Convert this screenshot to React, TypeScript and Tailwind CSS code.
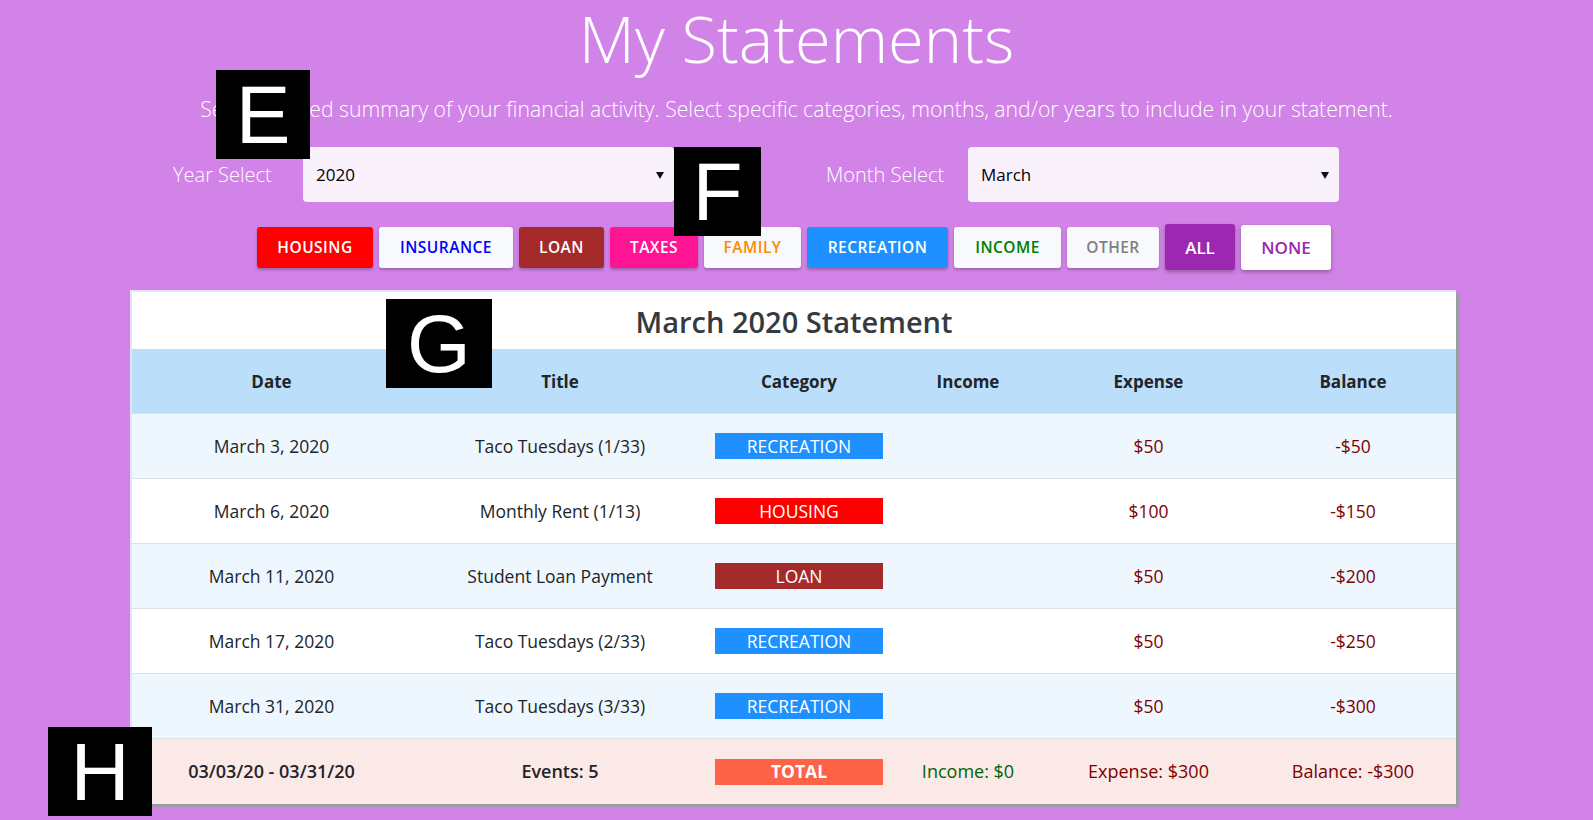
import React from "react";

const buttons: { label: string; cls: string }[] = [
  { label: "HOUSING", cls: "w-[116px] h-[41px] bg-[#ff0000] text-white" },
  { label: "INSURANCE", cls: "w-[134px] h-[41px] bg-[#f8f9fc] text-[#0000ff]" },
  { label: "LOAN", cls: "w-[85px] h-[41px] bg-[#a52a2a] text-white" },
  { label: "TAXES", cls: "w-[88px] h-[41px] bg-[#ff1493] text-white" },
  { label: "FAMILY", cls: "w-[97px] h-[41px] bg-[#f8f9fc] text-[#ff8c00]" },
  { label: "RECREATION", cls: "w-[141px] h-[41px] bg-[#1e90ff] text-white" },
  { label: "INCOME", cls: "w-[107px] h-[41px] bg-[#f8f9fc] text-[#008000]" },
  { label: "OTHER", cls: "w-[92px] h-[41px] bg-[#f8f9fc] text-[#808080]" },
];

type Row = {
  date: string;
  title: string;
  cat: string;
  catCls: string;
  expense: string;
  balance: string;
};

const rows: Row[] = [
  { date: "March 3, 2020", title: "Taco Tuesdays (1/33)", cat: "RECREATION", catCls: "bg-[#1e90ff]", expense: "$50", balance: "-$50" },
  { date: "March 6, 2020", title: "Monthly Rent (1/13)", cat: "HOUSING", catCls: "bg-[#ff0000]", expense: "$100", balance: "-$150" },
  { date: "March 11, 2020", title: "Student Loan Payment", cat: "LOAN", catCls: "bg-[#a52a2a]", expense: "$50", balance: "-$200" },
  { date: "March 17, 2020", title: "Taco Tuesdays (2/33)", cat: "RECREATION", catCls: "bg-[#1e90ff]", expense: "$50", balance: "-$250" },
  { date: "March 31, 2020", title: "Taco Tuesdays (3/33)", cat: "RECREATION", catCls: "bg-[#1e90ff]", expense: "$50", balance: "-$300" },
];

const gridCols = "grid grid-cols-[279px_298px_180px_158px_203px_1fr]";

function SelectBox({ value }: { value: string }) {
  return (
    <div className="w-[371px] h-[55px] rounded-[4px] bg-[#f9f2fc] flex items-center justify-between pl-[13px] pr-[10px] text-[17px] text-black">
      <span>{value}</span>
      <svg width="8" height="8" viewBox="0 0 8 8">
        <path d="M0 1 L8 1 L4 8 Z" fill="#111" />
      </svg>
    </div>
  );
}

function Label({ ch, cls }: { ch: string; cls: string }) {
  return (
    <div
      className={`absolute bg-black text-white flex items-center justify-center font-['Liberation_Sans',sans-serif] text-[82px] leading-none ${cls}`}
    >
      {ch}
    </div>
  );
}

export default function App() {
  return (
    <div className="relative w-full h-[820px] overflow-hidden bg-[#d283e7] font-['Open_Sans',sans-serif]">
      <div className="flex flex-col items-center">
        <h1 className="-mt-[6px] text-[65px] leading-[88px] font-light text-white">My Statements</h1>
        <p className="mt-[13px] text-[21.2px] leading-7 font-light text-white">
          See a detailed summary of your financial activity. Select specific categories, months, and/or years to include in your statement.
        </p>
      </div>

      <div className="mt-[24px] flex items-center pl-[173px]">
        <div className="w-[130px] text-[20px] font-light text-white">Year Select</div>
        <SelectBox value="2020" />
        <div className="w-[152px]" />
        <div className="w-[142px] text-[20px] font-light text-white">Month Select</div>
        <SelectBox value="March" />
      </div>

      <div className="mt-[22px] h-[46px] flex items-center justify-start gap-[6px] pl-[257px]">
        {buttons.map((b) => (
          <div
            key={b.label}
            className={`${b.cls} rounded-[3px] flex items-center justify-center pt-[2px] text-[15.5px] font-semibold tracking-[0.03em] shadow-[0_2px_3px_rgba(0,0,0,0.25)]`}
          >
            {b.label}
          </div>
        ))}
        <div className="w-[70px] h-[46px] rounded-[3px] bg-[#9c27b0] text-white flex items-center justify-center pt-[1px] text-[17px] font-semibold shadow-[0_2px_4px_rgba(0,0,0,0.3)]">
          ALL
        </div>
        <div className="w-[90px] h-[45px] rounded-[3px] bg-white text-[#9c27b0] flex items-center justify-center pt-[1px] text-[17px] font-semibold shadow-[0_2px_4px_rgba(0,0,0,0.3)]">
          NONE
        </div>
      </div>

      <div className="mt-[20px] ml-[130px] w-[1326px] bg-white border-t-2 border-l-2 border-[#e4e2f8] shadow-[3px_3px_1px_#9c9ca6]">
        <div className="h-[57px] flex items-center justify-center text-[29px] font-semibold text-[#343a40] pt-[2px]">
          March 2020 Statement
        </div>
        <div className={`${gridCols} h-[65px] bg-[#bbdefb] text-[17px] font-bold text-[#212529] border-b border-[#dee2e6]`}>
          {["Date", "Title", "Category", "Income", "Expense", "Balance"].map((h) => (
            <div key={h} className="flex items-center justify-center pt-[1px]">
              {h}
            </div>
          ))}
        </div>
        {rows.map((r, i) => (
          <div
            key={i}
            className={`${gridCols} h-[65px] text-[17.5px] border-b border-[#dee2e6] ${i % 2 === 0 ? "bg-[#eff7fe]" : "bg-white"}`}
          >
            <div className="flex items-center justify-center text-[#212529]">{r.date}</div>
            <div className="flex items-center justify-center text-[#212529]">{r.title}</div>
            <div className="flex items-center justify-center px-[6px]">
              <div className={`w-full h-[26px] ${r.catCls} text-white flex items-center justify-center text-[17.5px]`}>
                {r.cat}
              </div>
            </div>
            <div />
            <div className="flex items-center justify-center font-medium text-[#7d0000]">{r.expense}</div>
            <div className="flex items-center justify-center font-medium text-[#7d0000]">{r.balance}</div>
          </div>
        ))}
        <div className={`${gridCols} h-[65px] bg-[#fbe9e7] text-[18px]`}>
          <div className="flex items-center justify-center font-semibold text-[#212529]">03/03/20 - 03/31/20</div>
          <div className="flex items-center justify-center font-semibold text-[#212529]">Events: 5</div>
          <div className="flex items-center justify-center px-[6px]">
            <div className="w-full h-[26px] bg-[#ff6347] text-white flex items-center justify-center font-bold text-[17.5px]">
              TOTAL
            </div>
          </div>
          <div className="flex items-center justify-center font-medium text-[#006400]">Income: $0</div>
          <div className="flex items-center justify-center font-medium text-[#7d0000]">Expense: $300</div>
          <div className="flex items-center justify-center font-medium text-[#7d0000]">Balance: -$300</div>
        </div>
      </div>

      <Label ch="E" cls="left-[216px] top-[70px] w-[94px] h-[89px]" />
      <Label ch="F" cls="left-[674px] top-[147px] w-[87px] h-[89px]" />
      <Label ch="G" cls="left-[386px] top-[299px] w-[106px] h-[89px]" />
      <Label ch="H" cls="left-[48px] top-[727px] w-[104px] h-[89px]" />
    </div>
  );
}
